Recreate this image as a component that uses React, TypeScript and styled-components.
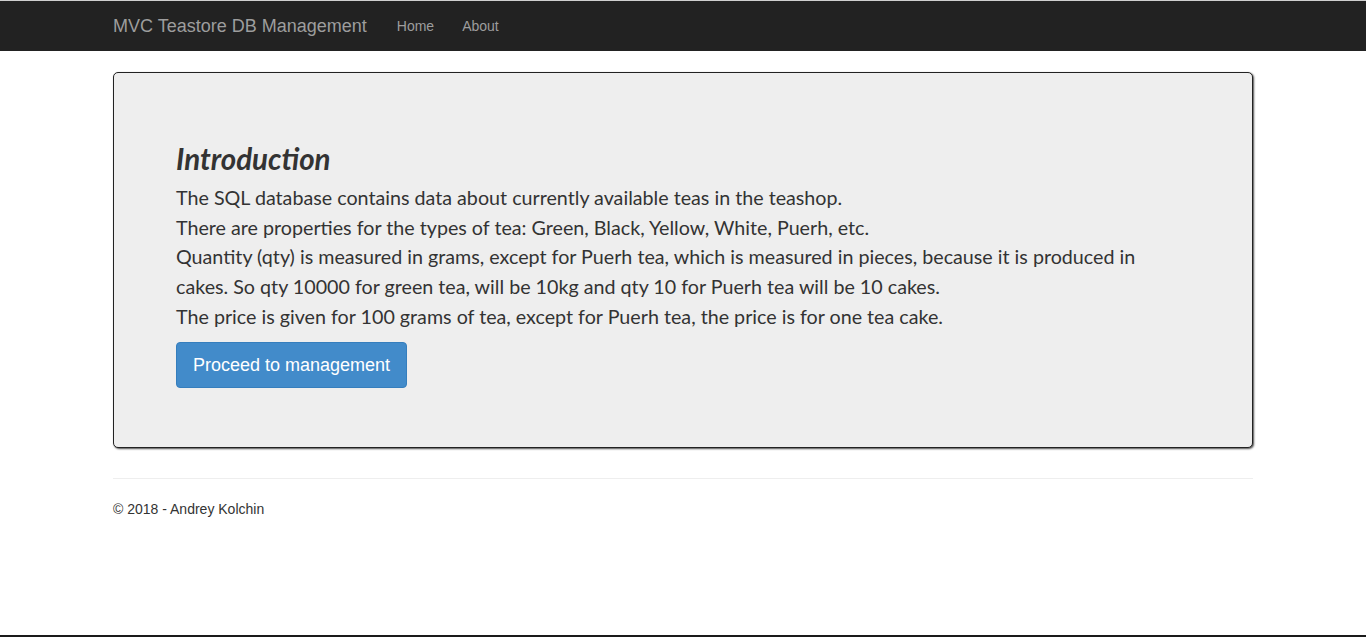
import React, { FC } from 'react'
import styled, { createGlobalStyle } from 'styled-components'

const GlobalStyle = createGlobalStyle`
  * { box-sizing: border-box; }
  html, body { margin: 0; padding: 0; background: #fff; }
  body {
    font-family: "Liberation Sans", Arial, sans-serif;
    font-size: 14px;
    line-height: 1.42857;
    color: #333;
  }
`;

const lines = [
  'The SQL database contains data about currently available teas in the teashop.',
  'There are properties for the types of tea: Green, Black, Yellow, White, Puerh, etc.',
  'Quantity (qty) is measured in grams, except for Puerh tea, which is measured in pieces, because it is produced in',
  'cakes. So qty 10000 for green tea, will be 10kg and qty 10 for Puerh tea will be 10 cakes.',
  'The price is given for 100 grams of tea, except for Puerh tea, the price is for one tea cake.',
]

const App: FC = () => (
  <Page>
    <GlobalStyle />
    <Navbar>
      <Container>
        <Brand href="#">MVC Teastore DB Management</Brand>
        <NavLink href="#">Home</NavLink>
        <NavLink href="#">About</NavLink>
      </Container>
    </Navbar>
    <Body>
      <Jumbotron>
        <Heading>Introduction</Heading>
        <Text>
          {lines.map((line) => (
            <Line key={line}>{line}</Line>
          ))}
        </Text>
        <Button>Proceed to management</Button>
      </Jumbotron>
      <Rule />
      <Footer>© 2018 - Andrey Kolchin</Footer>
    </Body>
  </Page>
)

export default App;

const Page = styled.div`
  min-height: 637px;
  border-top: 1px solid #cfcfcf;
  border-bottom: 2px solid #1a1a1a;
  display: flex;
  flex-direction: column;
`;

const Navbar = styled.nav`
  height: 50px;
  background: #222;
  margin-bottom: 21px;
`;

const Container = styled.div`
  width: 1140px;
  margin: 0 auto;
  display: flex;
  align-items: center;
  height: 100%;
`;

const Brand = styled.a`
  font-size: 18px;
  color: #9d9d9d;
  text-decoration: none;
  padding-right: 16px;
  line-height: 20px;
`;

const NavLink = styled.a`
  font-size: 14px;
  color: #9d9d9d;
  text-decoration: none;
  padding: 15px 14px;
  line-height: 20px;
`;

const Body = styled.div`
  width: 1140px;
  margin: 0 auto;
`;

const Jumbotron = styled.div`
  background: #eee;
  border: 1px solid #222;
  border-radius: 5px;
  box-shadow: 1px 1px 2px rgba(0, 0, 0, 0.7);
  padding: 68px 62px 59px;
  margin-bottom: 30px;
`;

const Heading = styled.h2`
  margin: 0 0 6px;
  font-family: Lato, "Open Sans", sans-serif;
  font-style: italic;
  font-weight: 700;
  font-size: 29.5px;
  line-height: 36px;
  color: #333;
`;

const Text = styled.p`
  margin: 0 0 10px;
  font-family: Lato, "Open Sans", sans-serif;
  font-size: 19.7px;
  line-height: 29.7px;
  color: #333;
`;

const Line = styled.span`
  display: block;
  white-space: nowrap;
`;

const Button = styled.button`
  font-family: "Liberation Sans", Arial, sans-serif;
  font-size: 18px;
  line-height: 24px;
  padding: 10px 16px;
  color: #fff;
  background: #428bca;
  border: 1px solid #357ebd;
  border-radius: 4px;
  cursor: pointer;
`;

const Rule = styled.hr`
  margin: 0 0 20px;
  border: 0;
  border-top: 1px solid #eee;
`;

const Footer = styled.p`
  margin: 0;
  line-height: 20px;
`;
